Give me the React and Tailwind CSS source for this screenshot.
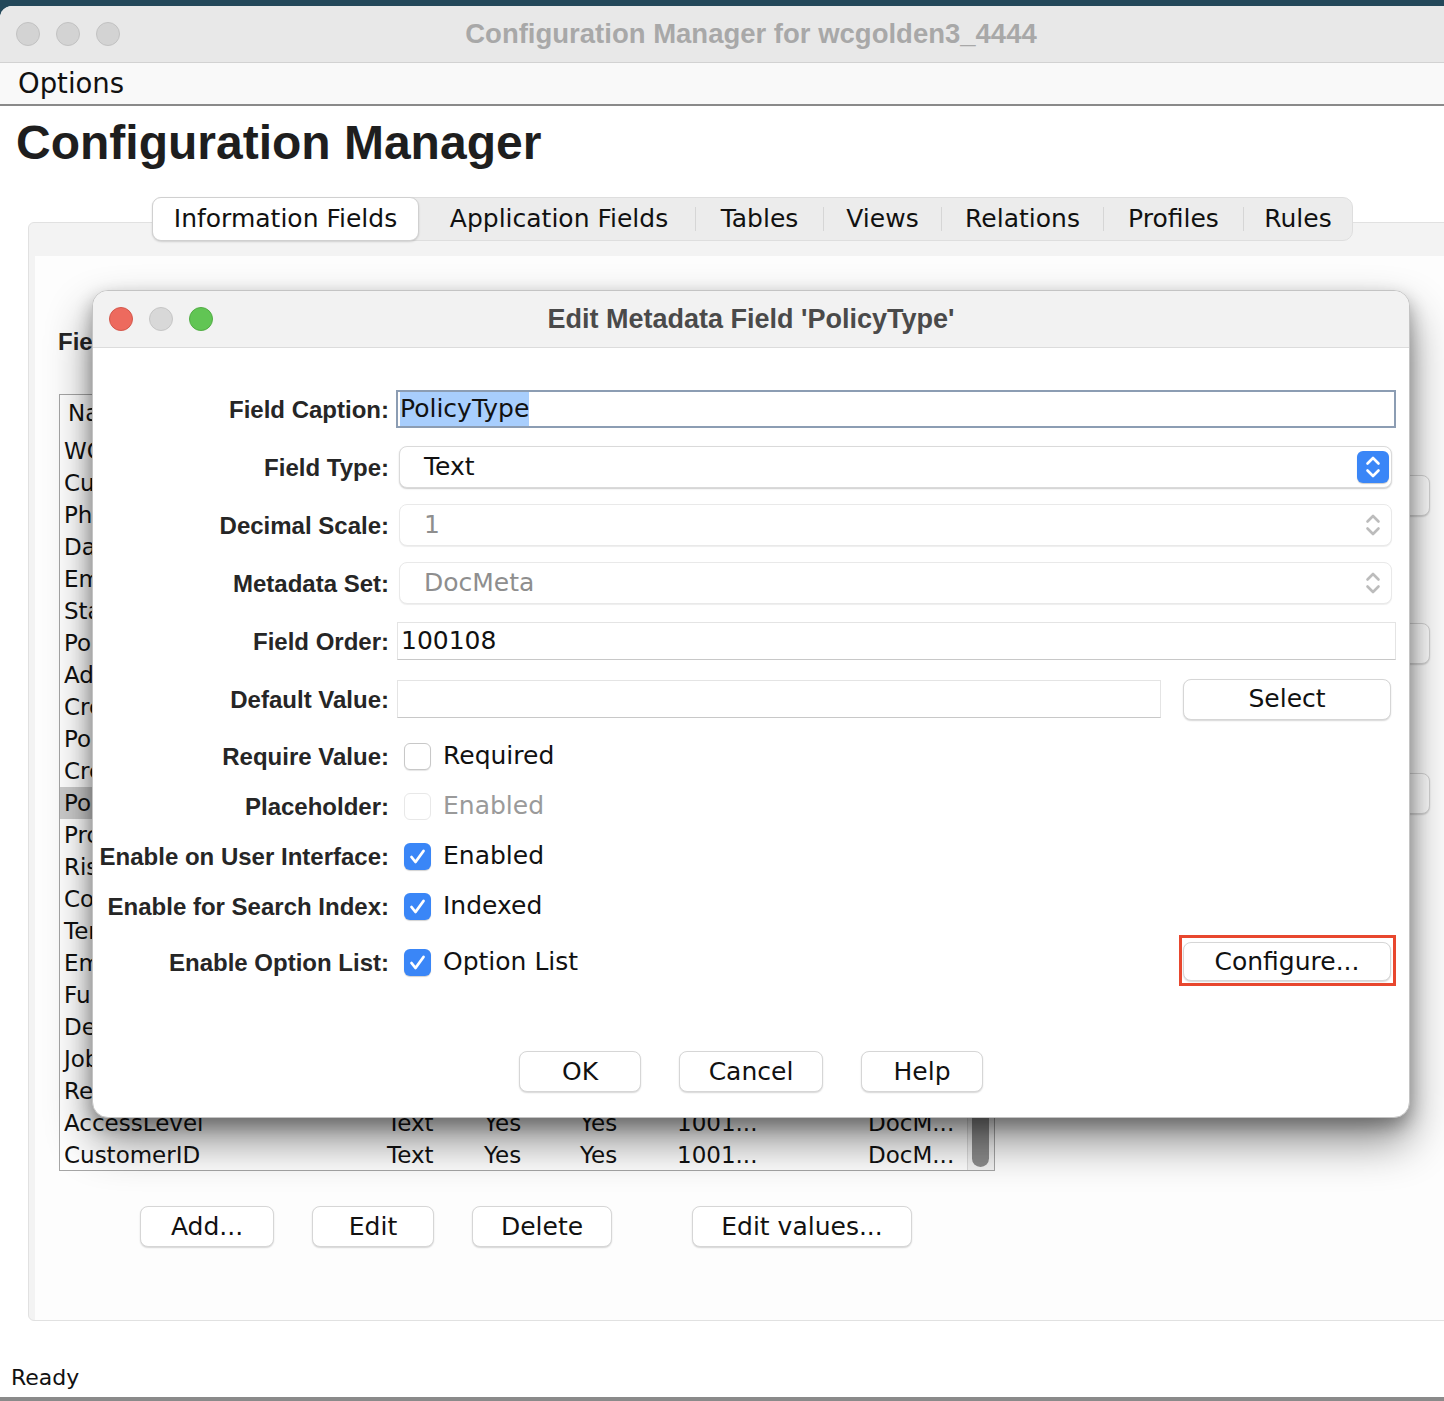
import React from "react";

const lucida = "font-['DejaVu_Sans',sans-serif]";
const helv = "font-['Liberation_Sans',Arial,sans-serif]";

const fields = [
  "WCSite", "CustomerName", "Phone", "DateOfBirth", "Email", "State", "PolicyNumber",
  "Address", "CreateDate", "PolicyStartDate", "CreatedBy", "PolicyType", "Product",
  "RiskLevel", "Country", "Term", "EmployeeID", "FullName", "Department", "JobTitle",
  "Region", "AccessLevel", "CustomerID",
];

const tabs = [
  { name: "Information Fields", w: "w-[267px]", active: true },
  { name: "Application Fields", w: "w-[276px] pl-[4px]" },
  { name: "Tables", w: "w-[128px] border-l border-[#d6d6d6]" },
  { name: "Views", w: "w-[118px] border-l border-[#d6d6d6]" },
  { name: "Relations", w: "w-[162px] border-l border-[#d6d6d6]" },
  { name: "Profiles", w: "w-[140px] border-l border-[#d6d6d6]" },
  { name: "Rules", w: "w-[109px] border-l border-[#d6d6d6]" },
];

function Chevrons({ color }) {
  return (
    <svg width="32" height="32" viewBox="0 0 32 32" fill="none" stroke={color} strokeWidth="2.6" strokeLinecap="round" strokeLinejoin="round">
      <path d="M10.5 12.5 L16 7 L21.5 12.5" />
      <path d="M10.5 19.5 L16 25 L21.5 19.5" />
    </svg>
  );
}

function Combo({ value, disabled }) {
  return (
    <div
      className={`ml-[10px] flex h-[42px] w-[993px] items-center justify-between rounded-[8px] border bg-white pl-[24px] pr-[2px] ${
        disabled
          ? "border-[#e9e9e9] shadow-[0_1px_1px_rgba(0,0,0,0.07)]"
          : "border-[#dadada] shadow-[0_1px_1.5px_rgba(0,0,0,0.2)]"
      }`}
    >
      <span className={`${lucida} text-[25px] ${disabled ? "text-[#8e8e8e]" : "text-[#111]"}`}>{value}</span>
      {disabled ? (
        <div className="flex h-[32px] w-[32px] items-center justify-center">
          <Chevrons color="#bcbcbc" />
        </div>
      ) : (
        <div className="flex h-[32px] w-[32px] items-center justify-center rounded-[6px] bg-[#3a86f7] shadow-[0_1px_1px_rgba(0,0,0,0.2)]">
          <Chevrons color="#ffffff" />
        </div>
      )}
    </div>
  );
}

function Btn({ children, className }) {
  return (
    <button
      type="button"
      className={`flex items-center justify-center rounded-[8px] border border-[#d6d6d6] bg-white text-[25px] text-[#111] shadow-[0_1px_1.5px_rgba(0,0,0,0.16)] ${lucida} ${className}`}
    >
      {children}
    </button>
  );
}

function Check({ checked, disabled }) {
  if (checked) {
    return (
      <div className="ml-[15px] flex h-[27px] w-[27px] items-center justify-center rounded-[6px] bg-[#3a86f7] shadow-[0_1px_1px_rgba(0,0,0,0.18)]">
        <svg width="27" height="27" viewBox="0 0 27 27" fill="none" stroke="#fff" strokeWidth="2.8" strokeLinecap="round" strokeLinejoin="round">
          <path d="M7.5 14 L11.5 19 L19.5 8" />
        </svg>
      </div>
    );
  }
  return (
    <div
      className={`ml-[15px] h-[27px] w-[27px] rounded-[6px] border bg-white ${
        disabled ? "border-[#e8e8e8]" : "border-[#c8c8c8] shadow-[0_1px_1px_rgba(0,0,0,0.1)]"
      }`}
    />
  );
}

function Label({ children }) {
  return (
    <div className={`w-[296px] shrink-0 text-right text-[24px] font-bold leading-[27px] text-[#262626] ${helv}`}>
      {children}
    </div>
  );
}

function CheckRow({ label, text, checked, disabled, className }) {
  return (
    <div className={`flex items-center ${className}`}>
      <Label>{label}</Label>
      <Check checked={checked} disabled={disabled} />
      <span className={`ml-[12px] text-[25px] ${lucida} ${disabled ? "text-[#9a9a9a]" : "text-[#111]"}`}>{text}</span>
    </div>
  );
}

function Dialog() {
  return (
    <div className="absolute left-[92px] top-[290px] flex h-[828px] w-[1318px] flex-col overflow-hidden rounded-[16px] border border-[#c4c4c4] bg-white shadow-[0_24px_45px_rgba(0,0,0,0.45),0_8px_18px_rgba(0,0,0,0.3)]">
      <div className="relative flex h-[57px] shrink-0 items-center justify-center border-b border-[#dcdcdc] bg-[#f2f2f2]">
        <div className="absolute left-[16px] top-[16px] flex gap-[16px]">
          <div className="h-[24px] w-[24px] rounded-full border border-[#d4584c] bg-[#ed6a5e]" />
          <div className="h-[24px] w-[24px] rounded-full border border-[#c6c6c6] bg-[#d8d8d8]" />
          <div className="h-[24px] w-[24px] rounded-full border border-[#52ad45] bg-[#61c554]" />
        </div>
        <span className={`text-[27px] font-bold text-[#4a4a4a] ${helv}`}>Edit Metadata Field 'PolicyType'</span>
      </div>

      <div className="flex flex-col pr-[13px] pt-[32px]">
        <div className="flex h-[58px] items-center">
          <Label>Field Caption:</Label>
          <div className="ml-[7px] flex h-[38px] w-[1002px] items-center border-2 border-[#8c9db3] bg-white pl-[2px]">
            <span className={`bg-[#a8cefd] text-[25px] leading-[34px] text-[#111] ${lucida}`}>PolicyType</span>
          </div>
        </div>
        <div className="flex h-[58px] items-center">
          <Label>Field Type:</Label>
          <Combo value="Text" />
        </div>
        <div className="flex h-[58px] items-center">
          <Label>Decimal Scale:</Label>
          <Combo value="1" disabled />
        </div>
        <div className="flex h-[58px] items-center">
          <Label>Metadata Set:</Label>
          <Combo value="DocMeta" disabled />
        </div>
        <div className="flex h-[58px] items-center">
          <Label>Field Order:</Label>
          <div className="ml-[8px] flex h-[38px] w-[1001px] items-center border border-[#e4e4e4] border-b-[#c8c8c8] bg-white pl-[3px]">
            <span className={`text-[25px] text-[#111] ${lucida}`}>100108</span>
          </div>
        </div>
        <div className="flex h-[58px] items-center">
          <Label>Default Value:</Label>
          <div className="ml-[8px] h-[38px] w-[764px] border border-[#e4e4e4] border-b-[#c8c8c8] bg-white" />
          <Btn className="ml-[22px] h-[41px] w-[208px]">Select</Btn>
        </div>

        <CheckRow className="mt-[3px] h-[50px]" label="Require Value:" text="Required" />
        <CheckRow className="h-[50px]" label="Placeholder:" text="Enabled" disabled />
        <CheckRow className="h-[50px]" label="Enable on User Interface:" text="Enabled" checked />
        <CheckRow className="h-[50px]" label="Enable for Search Index:" text="Indexed" checked />

        <div className="mt-[6px] flex h-[50px] items-center">
          <Label>Enable Option List:</Label>
          <Check checked />
          <span className={`ml-[12px] text-[25px] text-[#111] ${lucida}`}>Option List</span>
          <div className="ml-auto flex h-[51px] w-[217px] -translate-y-[2px] items-center border-[3px] border-[#e8472e] pl-[1px] pt-[3px]">
            <Btn className="h-[39px] w-[208px]">Configure...</Btn>
          </div>
        </div>

        <div className="mt-[64px] flex justify-center gap-[38px] pl-[13px]">
          <Btn className="h-[41px] w-[122px]">OK</Btn>
          <Btn className="h-[41px] w-[144px]">Cancel</Btn>
          <Btn className="h-[41px] w-[122px]">Help</Btn>
        </div>
      </div>
    </div>
  );
}

function FieldTable() {
  return (
    <div className="mt-[39px] flex h-[777px] w-[936px] border border-[#a6a6a6] bg-white">
      <div className={`flex-1 text-[23px] text-[#111] ${lucida}`}>
        <div className="grid h-[40px] grid-cols-[323px_97px_96px_97px_191px_1fr] pl-[8px] pt-[2px] leading-[32px]">
          <span>Name</span>
          <span>Type</span>
          <span>Enabled</span>
          <span>Indexed</span>
          <span>Order</span>
          <span>Set</span>
        </div>
        {fields.map((f) => (
          <div
            key={f}
            className={`grid h-[32px] grid-cols-[323px_97px_96px_97px_191px_1fr] pl-[4px] leading-[32px] ${
              f === "PolicyType" ? "bg-[#cbcbcb]" : ""
            }`}
          >
            <span>{f}</span>
            <span>Text</span>
            <span>Yes</span>
            <span>Yes</span>
            <span>1001...</span>
            <span>DocM...</span>
          </div>
        ))}
      </div>
      <div className="flex w-[27px] flex-col justify-end border-l border-[#dcdcdc] bg-[#f4f4f4] px-[4px] pb-[3px]">
        <div className="h-[420px] w-[17px] rounded-full bg-[#8c8c8c]" />
      </div>
    </div>
  );
}

export default function App() {
  return (
    <div className="relative h-[1401px] w-[1444px] overflow-hidden bg-[#23485a] pt-[6px]">
      <div className="flex h-[1395px] w-[1502px] flex-col overflow-hidden rounded-tl-[12px] bg-white">
        {/* window title bar */}
        <div className="relative flex h-[57px] shrink-0 items-center justify-center border-b border-[#d2d2d2] bg-[#e8e8e8]">
          <div className="absolute left-[16px] top-[16px] flex gap-[16px]">
            <div className="h-[24px] w-[24px] rounded-full border border-[#c2c2c2] bg-[#d3d3d3]" />
            <div className="h-[24px] w-[24px] rounded-full border border-[#c2c2c2] bg-[#d3d3d3]" />
            <div className="h-[24px] w-[24px] rounded-full border border-[#c2c2c2] bg-[#d3d3d3]" />
          </div>
          <span className={`text-[27.5px] font-bold text-[#a8a8a8] ${helv}`}>Configuration Manager for wcgolden3_4444</span>
        </div>

        {/* menu bar */}
        <div className="flex h-[43px] shrink-0 items-center border-b-2 border-[#8a8a8a] bg-[#f9f9f9] pl-[18px]">
          <span className={`text-[27.5px] text-[#111] ${lucida}`}>Options</span>
        </div>

        <h1 className={`ml-[16px] mt-[13px] text-[48px] font-bold leading-[48px] text-[#1e1e1e] ${helv}`}>
          Configuration Manager
        </h1>

        {/* tabs */}
        <div className="relative z-10 ml-[152px] mt-[30px] flex h-[44px] w-[1201px] items-center rounded-[10px] border border-[#dedede] bg-[#ececec]">
          {tabs.map((t) => (
            <div key={t.name} className={`flex h-[24px] items-center justify-center ${t.active ? "" : t.w}`}>
              {t.active ? (
                <div className={`-ml-px flex h-[44px] items-center justify-center rounded-[9px] border border-[#d0d0d0] bg-white shadow-[0_1px_2px_rgba(0,0,0,0.15)] ${t.w}`}>
                  <span className={`text-[25px] text-[#111] ${lucida}`}>{t.name}</span>
                </div>
              ) : (
                <span className={`text-[25px] text-[#111] ${lucida}`}>{t.name}</span>
              )}
            </div>
          ))}
        </div>

        {/* tab content panel */}
        <div className="ml-[28px] -mt-[19px] flex h-[1099px] shrink-0 flex-col rounded-[6px] border border-[#e1e1e1] bg-[#f3f3f3] pl-[6px] pt-[33px]">
          <div className="flex flex-1 bg-[#fdfdfd]">
            <div className="flex w-[960px] shrink-0 flex-col pl-[24px]">
              <div className={`-ml-px mt-[72px] text-[24px] font-bold leading-[27px] text-[#262626] ${helv}`}>Fields:</div>
              <FieldTable />
              <div className="ml-[81px] mt-[35px] flex">
                <Btn className="h-[41px] w-[134px]">Add...</Btn>
                <Btn className="ml-[38px] h-[41px] w-[122px]">Edit</Btn>
                <Btn className="ml-[38px] h-[41px] w-[140px]">Delete</Btn>
                <Btn className="ml-[80px] h-[41px] w-[220px]">Edit values...</Btn>
              </div>
            </div>
            <div className="ml-[235px] flex flex-col pt-[219px]">
              <Btn className="h-[41px] w-[200px]">Info...</Btn>
              <Btn className="mt-[107px] h-[41px] w-[200px]">Update</Btn>
              <Btn className="mt-[109px] h-[41px] w-[200px]">Publish</Btn>
            </div>
          </div>
        </div>

        {/* status bar */}
        <div className="flex flex-1 items-end pb-[6px] pl-[11px]">
          <span className={`text-[22px] leading-[26px] text-[#111] ${lucida}`}>Ready</span>
        </div>
        <div className="h-[4px] shrink-0 bg-[#8a8a8a]" />
      </div>

      <Dialog />
    </div>
  );
}
